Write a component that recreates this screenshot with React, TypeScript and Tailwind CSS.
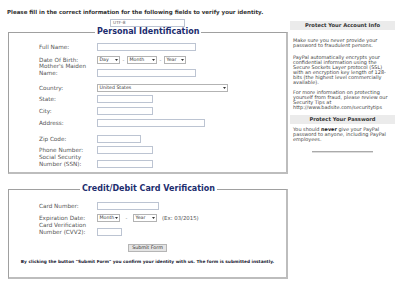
import React from "react";

function Tri() {
  return (
    <svg width="3" height="2" viewBox="0 0 3 2" className="shrink-0">
      <path d="M0 0H3L1.5 2Z" fill="#333" />
    </svg>
  );
}

function Sel({ className, label }: { className: string; label: string }) {
  return (
    <span
      className={`inline-flex h-[8px] items-center justify-between border border-[#b3b3b3] bg-white px-[1.5px] text-[4.7px] leading-[6px] text-[#333] ${className}`}
    >
      <span>{label}</span>
      <Tri />
    </span>
  );
}

function Inp({ className }: { className: string }) {
  return <span className={`block h-[8px] border border-[#bcc4d2] bg-white ${className}`} />;
}

function Dash({ className }: { className: string }) {
  return <span className={`text-center text-[5px] leading-[6px] text-[#777] ${className}`}>-</span>;
}

function Row({
  className,
  label,
  children,
}: {
  className: string;
  label: React.ReactNode;
  children: React.ReactNode;
}) {
  return (
    <div className={`flex ${className}`}>
      <div className="w-[58px] shrink-0 text-[5.7px] leading-[7px] text-[#555]">{label}</div>
      <div className="flex items-center">{children}</div>
    </div>
  );
}

export default function App() {
  return (
    <div className="flex h-[293px] w-[400px] overflow-hidden bg-white font-['DejaVu_Sans',Verdana,sans-serif]">
      <div className="flex w-[288px] shrink-0 flex-col pl-[7px]">
        <p className="mt-[9px] h-[6px] whitespace-nowrap text-[5.5px] font-bold leading-[6px] text-[#333]">
          Please fill in the correct information for the following fields to verify your identity.
        </p>
        <div className="ml-[103px] mt-[4px] h-[8px] w-[75px] border border-[#bcc4d2] pl-[2px] text-[4.3px] leading-[6px] text-[#666]">
          UTF-8
        </div>

        <fieldset className="ml-[1px] w-[280px] border-b-2 border-l border-r-2 border-t border-b-[#bdbdbd] border-l-[#a0a0a0] border-r-[#bdbdbd] border-t-[#a0a0a0] pb-[4px]">
          <legend className="ml-[86px] px-[2px] text-[8px] font-bold leading-[10px] text-[#1c2d6e]">
            Personal Identification
          </legend>
          <div className="flex flex-col pl-[30px]">
            <Row className="mt-[6px] h-[8px] items-center" label="Full Name:">
              <Inp className="w-[99px]" />
            </Row>
            <Row className="mt-[5px] h-[8px] items-center" label="Date Of Birth:">
              <Sel className="w-[23px]" label="Day" />
              <Dash className="w-[7px]" />
              <Sel className="w-[30px]" label="Month" />
              <Dash className="w-[7px]" />
              <Sel className="w-[22px]" label="Year" />
            </Row>
            <Row className="h-[13px] items-end" label={<>Mother's Maiden<br />Name:</>}>
              <Inp className="w-[99px]" />
            </Row>
            <Row className="mt-[7px] h-[8px] items-center" label="Country:">
              <Sel className="w-[131px]" label="United States" />
            </Row>
            <Row className="mt-[3px] h-[8px] items-center" label="State:">
              <Inp className="w-[56px]" />
            </Row>
            <Row className="mt-[4px] h-[8px] items-center" label="City:">
              <Inp className="w-[56px]" />
            </Row>
            <Row className="mt-[4px] h-[8px] items-center" label="Address:">
              <Inp className="w-[108px]" />
            </Row>
            <Row className="mt-[8px] h-[8px] items-center" label="Zip Code:">
              <Inp className="w-[44px]" />
            </Row>
            <Row className="mt-[3px] h-[8px] items-center" label="Phone Number:">
              <Inp className="w-[56px]" />
            </Row>
            <Row className="h-[14px] items-end" label={<>Social Security<br />Number (SSN):</>}>
              <Inp className="w-[56px]" />
            </Row>
          </div>
        </fieldset>

        <fieldset className="ml-[1px] mt-[10px] w-[280px] border-b-2 border-l border-r-2 border-t border-b-[#bdbdbd] border-l-[#a0a0a0] border-r-[#bdbdbd] border-t-[#a0a0a0] pb-[13px]">
          <legend className="ml-[71px] px-[2px] text-[8px] font-bold leading-[10px] text-[#1c2d6e]">
            Credit/Debit Card Verification
          </legend>
          <div className="flex flex-col pl-[30px]">
            <Row className="mt-[8px] h-[8px] items-center" label="Card Number:">
              <Inp className="w-[62px]" />
            </Row>
            <Row className="mt-[4px] h-[8px] items-center" label="Expiration Date:">
              <Sel className="w-[23px]" label="Month" />
              <Dash className="w-[13px]" />
              <Sel className="w-[24px]" label="Year" />
              <span className="ml-[5px] text-[5.4px] leading-[6px] text-[#555]">(Ex: 03/2015)</span>
            </Row>
            <Row className="h-[14px] items-end" label={<>Card Verification<br />Number (CVV2):</>}>
              <Inp className="w-[25px]" />
            </Row>
          </div>
          <div className="mt-[8px] flex justify-center">
            <span className="flex h-[8px] w-[39px] items-center justify-center border border-[#b5b5b5] bg-[#e4e4e4] text-[4.8px] text-[#333]">
              Submit Form
            </span>
          </div>
          <p className="mt-[7px] whitespace-nowrap text-center text-[4.3px] font-bold leading-[5px] text-[#223]">
            By clicking the button "Submit Form" you confirm your identity with us. The form is submitted instantly.
          </p>
        </fieldset>
      </div>

      <div className="ml-[2px] flex w-[105px] shrink-0 flex-col text-[#444]">
        <div className="mt-[21px] h-[9px] bg-[#ebebeb] text-center text-[5.2px] font-bold leading-[9px] text-[#333]">
          Protect Your Account Info
        </div>
        <p className="mt-[7.5px] whitespace-nowrap pl-[3px] text-[4.95px] leading-[5px]">
          Make sure you never provide your
          <br />
          password to fraudulent persons.
        </p>
        <p className="mt-[7px] whitespace-nowrap pl-[3px] text-[4.95px] leading-[5px]">
          PayPal automatically encrypts your
          <br />
          confidential information using the
          <br />
          Secure Sockets Layer protocol (SSL)
          <br />
          with an encryption key length of 128-
          <br />
          bits (the highest level commercially
          <br />
          available).
        </p>
        <p className="mt-[5px] whitespace-nowrap pl-[3px] text-[4.95px] leading-[5px]">
          For more information on protecting
          <br />
          yourself from fraud, please review our
          <br />
          Security Tips at
          <br />
          http://www.badsite.com/securitytips
        </p>
        <div className="mt-[5.5px] h-[9px] bg-[#ebebeb] text-center text-[5.2px] font-bold leading-[9px] text-[#333]">
          Protect Your Password
        </div>
        <p className="mt-[2.5px] whitespace-nowrap pl-[3px] text-[4.95px] leading-[5px]">
          You should <b className="text-[#222]">never</b> give your PayPal
          <br />
          password to anyone, including PayPal
          <br />
          employees.
        </p>
        <div className="mx-auto mt-[9px] h-[2px] w-[61px] border-t border-[#aaa] bg-[#ddd]" />
      </div>
    </div>
  );
}
